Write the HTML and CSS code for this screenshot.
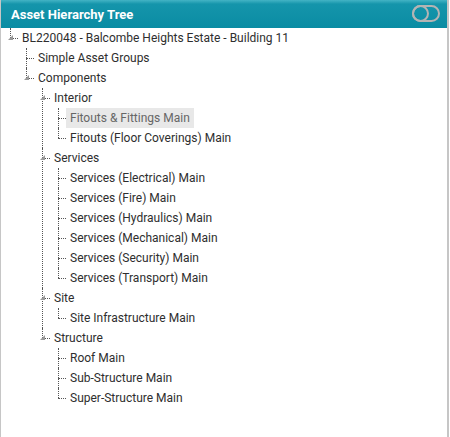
FILE: index.html
```html
<!DOCTYPE html>
<html lang="en">
<head>
    <meta charset="UTF-8">
    <meta name="viewport" content="width=device-width, initial-scale=1.0">
    <title>Asset Hierarchy Tree</title>
    <link rel="stylesheet" href="styles.css">
</head>
<body>
    <div class="panel">
        <div class="panel-header">
            <span class="panel-title">Asset Hierarchy Tree</span>
            <!-- toggle -->
            <svg class="toggle" width="28" height="17" viewBox="0 0 28 17">
                <rect x="1" y="1" width="26" height="15" rx="7.5" fill="none" stroke="#b4b4b4" stroke-width="2"/>
                <circle cx="8.5" cy="8.5" r="7.5" fill="none" stroke="#b4b4b4" stroke-width="2"/>
            </svg>
        </div>
        <div class="tree">
            <ul>
                <li class="open"><span class="exp"></span><a>BL220048 - Balcombe Heights Estate - Building 11</a>
                    <ul>
                        <li><a>Simple Asset Groups</a></li>
                        <li class="open"><span class="exp"></span><a>Components</a>
                            <ul>
                                <li class="open"><span class="exp"></span><a>Interior</a>
                                    <ul>
                                        <li><a class="selected">Fitouts &amp; Fittings Main</a></li>
                                        <li><a>Fitouts (Floor Coverings) Main</a></li>
                                    </ul>
                                </li>
                                <li class="open"><span class="exp"></span><a>Services</a>
                                    <ul>
                                        <li><a>Services (Electrical) Main</a></li>
                                        <li><a>Services (Fire) Main</a></li>
                                        <li><a>Services (Hydraulics) Main</a></li>
                                        <li><a>Services (Mechanical) Main</a></li>
                                        <li><a>Services (Security) Main</a></li>
                                        <li><a>Services (Transport) Main</a></li>
                                    </ul>
                                </li>
                                <li class="open"><span class="exp"></span><a>Site</a>
                                    <ul>
                                        <li><a>Site Infrastructure Main</a></li>
                                    </ul>
                                </li>
                                <li class="open"><span class="exp"></span><a>Structure</a>
                                    <ul>
                                        <li><a>Roof Main</a></li>
                                        <li><a>Sub-Structure Main</a></li>
                                        <li><a>Super-Structure Main</a></li>
                                    </ul>
                                </li>
                            </ul>
                        </li>
                    </ul>
                </li>
            </ul>
        </div>
    </div>
</body>
</html>
```

FILE: styles.css
```css
html, body {
    height: 100%;
}
body {
    margin: 0;
    font-family: Roboto, "Liberation Sans", Arial, sans-serif;
    background-color: #fff;
    color: #2e2e2e;
}
.panel {
    box-sizing: border-box;
    width: 449px;
    height: 100%;
    border-left: 1px solid #c6c6c6;
    border-right: 2px solid #c6c6c6;
    display: flex;
    flex-direction: column;
}
.panel-header {
    height: 28px;
    flex: none;
    display: flex;
    align-items: center;
    justify-content: space-between;
    padding: 0 7px 0 10px;
    background: linear-gradient(#43b3c5 0, #1595ab 4px, #0a8ca3 100%);
}
.panel-title {
    color: #fff;
    font-weight: bold;
    font-size: 13px;
}
.toggle {
    display: block;
    margin-top: -2px;
}
.tree {
    flex: 1;
    font-size: 12px;
}
.tree ul {
    list-style: none;
    margin: 0 0 0 -1px;
    padding: 0;
}
.tree > ul {
    margin: 0;
}
.tree li {
    position: relative;
    padding-left: 17px;
    line-height: 20px;
}
.tree li::before {
    content: "";
    position: absolute;
    left: 9px;
    top: 10px;
    width: 8px;
    border-top: 1px dotted #555;
}
.tree li::after {
    content: "";
    position: absolute;
    left: 9px;
    top: 0;
    bottom: 0;
    border-left: 1px dotted #555;
}
.tree li:last-child::after {
    bottom: auto;
    height: 10px;
}
.tree a {
    display: inline-block;
    height: 20px;
    padding: 0 4px;
    white-space: nowrap;
}
.tree a.selected {
    background-color: #e8e8e8;
    color: #666;
}
.exp {
    position: absolute;
    left: 7px;
    top: 7px;
    width: 0;
    height: 0;
    border-style: solid;
    border-width: 0 0 5px 5px;
    border-color: transparent transparent #999 transparent;
    z-index: 1;
}
```
